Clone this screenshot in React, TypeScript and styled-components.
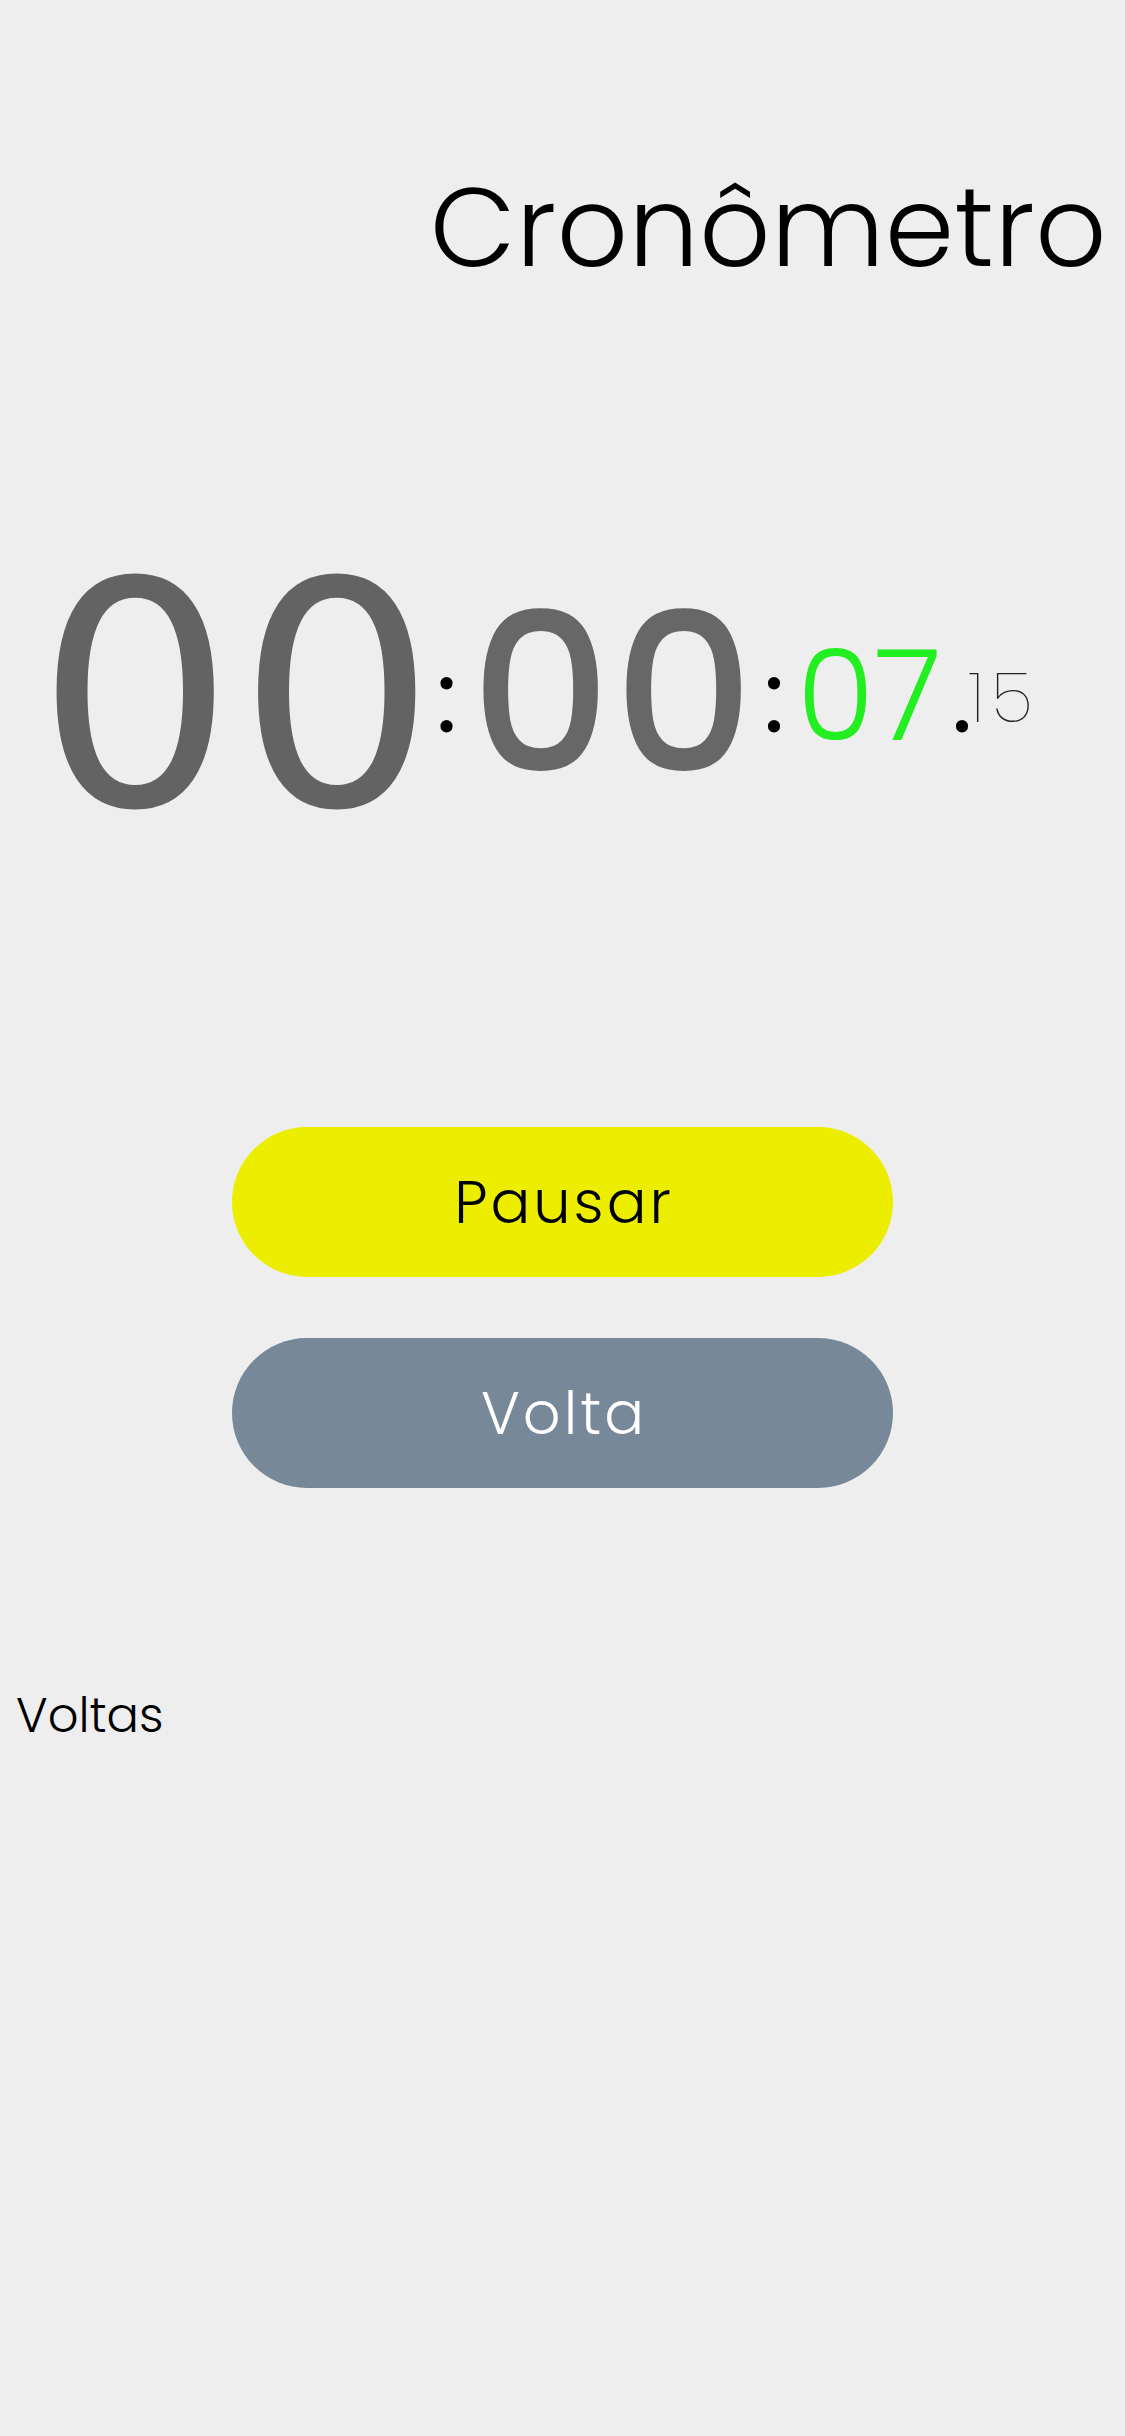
import React from "react";
import styled, { createGlobalStyle } from "styled-components";

const Global = createGlobalStyle`
  html, body { margin: 0; padding: 0; background: #eeeeee; }
  body { font-family: "Poppins", "Inter", "Liberation Sans", sans-serif; }
`;

const Page = styled.div`
  width: 1125px;
  min-height: 2436px;
  background: #eeeeee;
  display: flex;
  flex-direction: column;
`;

const Title = styled.h1`
  margin: 0;
  padding: 161px 18px 0 0;
  text-align: right;
  font-family: "Poppins", "Inter", sans-serif;
  font-weight: 300;
  font-size: 111px;
  letter-spacing: 0.5px;
  line-height: 1.2;
  color: #000;
`;

const TimerRow = styled.div`
  display: flex;
  flex-direction: row;
  align-items: flex-start;
  margin-top: 247px;
  padding-left: 36px;
`;

const Hours = styled.span`
  font-family: "DejaVu Sans", "Noto Sans", sans-serif;
  font-size: 312px;
  line-height: 1;
  color: #636363;
  letter-spacing: 3px;
`;

const Minutes = styled.span`
  font-family: "Poppins", sans-serif;
  font-weight: 500;
  font-size: 220px;
  line-height: 1;
  color: #676767;
  letter-spacing: 2px;
  margin-top: 43px;
`;

const Seconds = styled.span`
  font-family: "Poppins", sans-serif;
  font-weight: 300;
  font-size: 126px;
  line-height: 1;
  color: #22ee22;
  margin-top: 92px;
`;

const Millis = styled.span`
  font-family: "Poppins", sans-serif;
  font-weight: 200;
  font-size: 70px;
  line-height: 1;
  color: #222;
  letter-spacing: 7px;
  margin-top: 122px;
`;

const Sep = styled.span<{ $l: number; $r: number }>`
  font-family: "Poppins", sans-serif;
  font-weight: 400;
  font-size: 100px;
  line-height: 1;
  color: #000;
  margin-top: 106px;
  margin-left: ${(p) => p.$l}px;
  margin-right: ${(p) => p.$r}px;
`;

const Buttons = styled.div`
  display: flex;
  flex-direction: column;
  align-items: center;
  gap: 61px;
  margin-top: 274px;
`;

const Pill = styled.button<{ $bg: string; $fg: string }>`
  width: 661px;
  height: 150px;
  border: none;
  border-radius: 75px;
  background: ${(p) => p.$bg};
  color: ${(p) => p.$fg};
  font-family: "Poppins", "Inter", sans-serif;
  font-weight: 300;
  font-size: 59px;
  letter-spacing: 3px;
  display: flex;
  align-items: center;
  justify-content: center;
  padding: 0 0 0 3px;
`;

const LapsTitle = styled.div`
  margin-top: 194px;
  padding-left: 16px;
  font-family: "Poppins", "Inter", sans-serif;
  font-weight: 300;
  font-size: 48px;
  line-height: 1.4;
  color: #000;
`;

export default function App() {
  return (
    <Page>
      <Global />
      <Title>Cronômetro</Title>
      <TimerRow>
        <Hours>00</Hours>
        <Sep $l={-3} $r={13}>:</Sep>
        <Minutes>00</Minutes>
        <Sep $l={7} $r={12}>:</Sep>
        <Seconds>07</Seconds>
        <Sep $l={10} $r={-4}>.</Sep>
        <Millis>15</Millis>
      </TimerRow>
      <Buttons>
        <Pill $bg="#eded00" $fg="#000">Pausar</Pill>
        <Pill $bg="#778899" $fg="#fff">Volta</Pill>
      </Buttons>
      <LapsTitle>Voltas</LapsTitle>
    </Page>
  );
}
